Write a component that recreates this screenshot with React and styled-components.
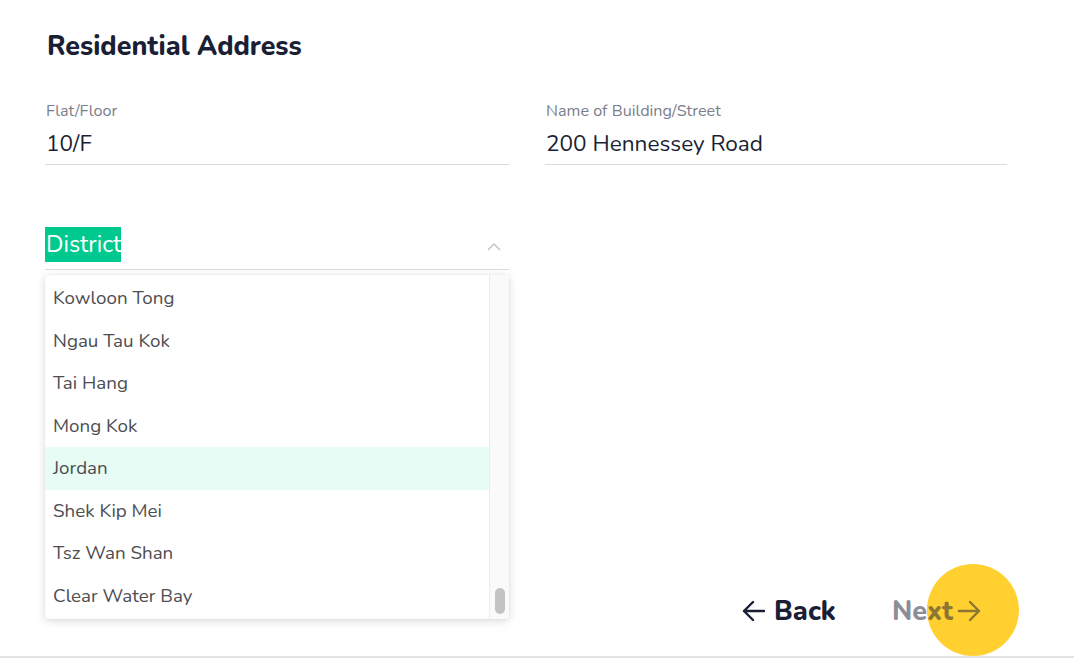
import React from "react";
import styled, { createGlobalStyle } from "styled-components";

const Global = createGlobalStyle`
  html, body { margin: 0; padding: 0; background: #fff; }
  body { font-family: "Nunito", "Lato", "Noto Sans", sans-serif; color: #1a1f36; }
  * { box-sizing: border-box; }
`;

const Page = styled.div`
  width: 1074px;
  height: 658px;
  position: relative;
  overflow: hidden;
  display: flex;
  flex-direction: column;
  border-bottom: 2px solid #e4e4e6;
`;

const Content = styled.div`
  flex: 1;
  padding: 30px 0 0 45px;
`;

const Title = styled.h2`
  margin: 0 0 0 2px;
  font-size: 26.8px;
  font-weight: 800;
  line-height: 32px;
  color: #1a1f36;
`;

const Grid = styled.div`
  display: grid;
  grid-template-columns: 464px 462px;
  column-gap: 36px;
  row-gap: 56px;
  margin-top: 6px;
`;

const Field = styled.div`
  position: relative;
  border-bottom: 1px solid #dcdcdf;
  height: ${(p) => p.$h}px;
  display: flex;
  flex-direction: column;
  justify-content: flex-end;
`;

const Label = styled.div`
  font-size: 16.2px;
  line-height: 20px;
  color: #7b7e8c;
  padding-left: 1px;
`;

const Value = styled.div`
  font-size: 22.6px;
  line-height: 30px;
  color: #1a1f36;
  padding: 8px 0 5px 1px;
`;

const SelectRow = styled.div`
  display: flex;
  align-items: center;
  justify-content: space-between;
  padding-bottom: 7px;
`;

const Highlight = styled.span`
  background: #00c98f;
  color: #fff;
  font-size: 23.5px;
  line-height: 35px;
  padding: 0 0 0 1px;
  width: 76px;
  display: inline-block;
  white-space: nowrap;
  overflow: hidden;
`;

const Chevron = styled.svg`
  width: 14px;
  height: 9px;
  margin-right: 8px;
  margin-top: 4px;
`;

const Menu = styled.div`
  position: absolute;
  top: calc(100% + 6px);
  left: 0;
  width: 464px;
  height: 344px;
  background: #fff;
  border-radius: 4px;
  box-shadow: 0 2px 10px rgba(0, 0, 0, 0.14), 0 0 2px rgba(0, 0, 0, 0.08);
  display: flex;
  overflow: hidden;
  z-index: 2;
`;

const List = styled.ul`
  list-style: none;
  margin: 0;
  padding: 2px 0 0 0;
  flex: 1;
`;

const Item = styled.li`
  height: 42.5px;
  display: flex;
  align-items: center;
  padding-left: 8px;
  font-size: 18.8px;
  color: #4d4d52;
  background: ${(p) => (p.$active ? "#e6fcf4" : "transparent")};
`;

const Track = styled.div`
  width: 20px;
  border-left: 1px solid #ececec;
  background: #fafafa;
  display: flex;
  align-items: flex-end;
  justify-content: center;
  padding-bottom: 5px;
`;

const Thumb = styled.div`
  width: 10px;
  height: 26px;
  border-radius: 5px;
  background: #c3c3c3;
`;

const Footer = styled.div`
  height: 92px;
  display: flex;
  justify-content: flex-end;
  align-items: center;
  gap: 56px;
  padding-right: 92px;
  padding-top: 2px;
  position: relative;
`;

const NavButton = styled.button`
  position: relative;
  z-index: 1;
  border: none;
  background: none;
  padding: 0;
  display: flex;
  align-items: center;
  gap: ${(p) => (p.$muted ? 3 : 7)}px;
  font-family: inherit;
  font-size: 27px;
  font-weight: 800;
  color: #1a1f36;
  opacity: ${(p) => (p.$muted ? 0.5 : 1)};
  cursor: pointer;
`;

const Arrow = styled.svg`
  width: 26px;
  height: 26px;
`;

const Cursor = styled.div`
  position: absolute;
  left: 927px;
  top: 564px;
  width: 92px;
  height: 92px;
  border-radius: 50%;
  background: #ffd02f;
  z-index: 0;
`;

const districts = [
  "Kowloon Tong",
  "Ngau Tau Kok",
  "Tai Hang",
  "Mong Kok",
  "Jordan",
  "Shek Kip Mei",
  "Tsz Wan Shan",
  "Clear Water Bay",
];

export default function App() {
  return (
    <>
      <Global />
      <Page>
        <Cursor />
        <Content>
          <Title>Residential Address</Title>
          <Grid>
            <Field $h={97}>
              <Label>Flat/Floor</Label>
              <Value>10/F</Value>
            </Field>
            <Field $h={97}>
              <Label>Name of Building/Street</Label>
              <Value>200 Hennessey Road</Value>
            </Field>
            <Field $h={49}>
              <SelectRow>
                <Highlight>District</Highlight>
                <Chevron viewBox="0 0 14 9" fill="none">
                  <path d="M1 8 L7 2 L13 8" stroke="#c4c4c8" strokeWidth="1.5" />
                </Chevron>
              </SelectRow>
              <Menu>
                <List>
                  {districts.map((d) => (
                    <Item key={d} $active={d === "Jordan"}>
                      {d}
                    </Item>
                  ))}
                </List>
                <Track>
                  <Thumb />
                </Track>
              </Menu>
            </Field>
          </Grid>
        </Content>
        <Footer>
          <NavButton>
            <Arrow viewBox="0 0 26 26" fill="none">
              <path d="M23 13 H3 M12 4 L3 13 L12 22" stroke="#1a1f36" strokeWidth="2.4" strokeLinecap="round" strokeLinejoin="round" />
            </Arrow>
            Back
          </NavButton>
          <NavButton $muted>
            Next
            <Arrow viewBox="0 0 26 26" fill="none">
              <path d="M3 13 H23 M14 4 L23 13 L14 22" stroke="#1a1f36" strokeWidth="2.4" strokeLinecap="round" strokeLinejoin="round" />
            </Arrow>
          </NavButton>
        </Footer>
      </Page>
    </>
  );
}
